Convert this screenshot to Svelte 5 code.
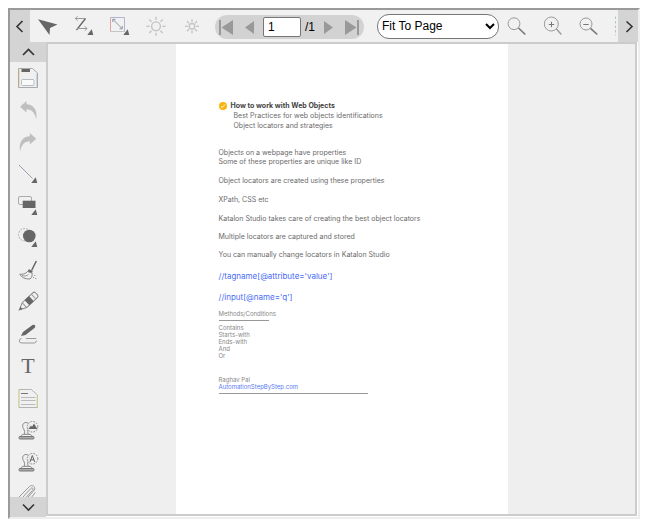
<script>
  let page = $state('1');
  let zoom = $state('Fit To Page');

  const rays = [0, 45, 90, 135, 180, 225, 270, 315];
  const facts = [
    'Object locators are created using these properties',
    'XPath, CSS etc',
    'Katalon Studio takes care of creating the best object locators',
    'Multiple locators are captured and stored',
    'You can manually change locators in Katalon Studio'
  ];
  const conditions = ['Contains', 'Starts-with', 'Ends-with', 'And', 'Or'];
</script>

{#snippet corner()}
  <path d="M21.3 25H27.3L25.7 19.3Z" fill="#666" />
{/snippet}

{#snippet sun(r, from, to)}
  <g fill="none" stroke="#c4c4c4" stroke-width="1.4">
    <circle cx="18" cy="16.3" {r} />
    {#each rays as a}
      <path d="M18 {16.3 - from}V{16.3 - to}" transform="rotate({a} 18 16.3)" />
    {/each}
  </g>
{/snippet}

{#snippet stamp()}
  <g fill="#f0f0f0" stroke="#888">
    <path d="M14 20.5C15.2 18 14.6 16.5 13.4 14.6C11.5 11 13.5 8.5 16 8.5C18.5 8.5 20.5 11 18.6 14.6C17.4 16.5 17.5 18 18.5 20.5Z" />
    <path d="M11 22C11.5 20.5 13 20.5 14 20.3H19C20.5 20.5 21.5 20.8 22 22" />
    <rect x="9" y="22.5" width="15" height="2.5" rx="1" fill="#aaa" stroke="#777" />
  </g>
  <circle cx="22.5" cy="12.7" r="5.3" fill="#f0f0f0" fill-opacity=".8" stroke="#888" stroke-dasharray="1.6 1.2" />
{/snippet}

<main class="viewer">
  <header class="top">
    <button class="scroll side" aria-label="Scroll left"><svg width="20" height="32"><path d="M12.5 11L7 16.5L12.5 22" /></svg></button>
    <div class="tools">
      <button class="tool" aria-label="Select"><svg viewBox="0 0 36 32"><path d="M8 9.3L27.5 14.5L20 18L19.5 25Z" fill="#666" /></svg></button>
      <button class="tool" aria-label="Polyline">
        <svg viewBox="0 0 36 32">
          <path d="M19.5 8.5L10.5 20" fill="none" stroke="#666" stroke-width="1.3" />
          <path d="M20 8.5H9.5M11.5 6.3L9.3 8.5L11.5 10.7M11 18.5H21M18.8 16.3L21 18.5L18.8 20.7" fill="none" stroke="#999" />
          {@render corner()}
        </svg>
      </button>
      <button class="tool" aria-label="Measure">
        <svg viewBox="0 0 36 32" fill="none">
          <path d="M8.5 21.5V7.5" stroke="#dca6a2" />
          <path d="M8.5 7.5H22.5V21.5" stroke="#b4b2d0" />
          <path d="M8.5 21.5H22.5" stroke="#c4c4c4" />
          <path d="M11 9.5L20 18.5M10.8 12V9.3H13.5M17.5 18.8H20.3V16" stroke="#8c98a8" />
          {@render corner()}
        </svg>
      </button>
      <button class="tool" aria-label="Brighter"><svg viewBox="0 0 36 32">{@render sun(4.4, 6.4, 9.5)}</svg></button>
      <button class="tool" aria-label="Darker"><svg viewBox="0 0 36 32">{@render sun(2.8, 4.3, 7)}</svg></button>

      <div class="pager">
        <button aria-label="First page"><svg width="14" height="15"><path d="M0 0H2V15H0ZM14 0V15L2.5 7.5Z" /></svg></button>
        <button class="prev" aria-label="Previous page"><svg width="9" height="13"><path d="M9 0V13L0 6.5Z" /></svg></button>
        <label><input aria-label="Page" bind:value={page} /><span>/1</span></label>
        <button class="next" aria-label="Next page"><svg width="9" height="13"><path d="M0 0V13L9 6.5Z" /></svg></button>
        <button aria-label="Last page"><svg width="14" height="15"><path d="M12 0H14V15H12ZM0 0V15L11.5 7.5Z" /></svg></button>
      </div>

      <select aria-label="Zoom" bind:value={zoom}><option>Fit To Page</option></select>

      <button class="tool" aria-label="Magnifier">
        <svg viewBox="0 0 36 32" fill="none" stroke="#999"><circle cx="15" cy="13.7" r="5.9" /><path d="M19.5 18L26.3 24.5" stroke="#777" stroke-width="1.6" /></svg>
      </button>
      <button class="tool" aria-label="Zoom in">
        <svg viewBox="0 0 36 32" fill="none" stroke="#999"><circle cx="16.3" cy="14" r="7" /><path d="M13.8 14.5H19.2M16.5 11.8V17.2" stroke="#777" /><path d="M21.5 19L26.3 24.5" stroke-width="1.3" /></svg>
      </button>
      <button class="tool" aria-label="Zoom out">
        <svg viewBox="0 0 36 32" fill="none" stroke="#999"><circle cx="15" cy="14" r="6" /><path d="M12.3 14.5H17.7" stroke="#777" /><path d="M19.5 18.3L26.3 24.5" stroke="#777" stroke-width="1.6" /></svg>
      </button>
      <button class="tool" aria-label="Marquee zoom">
        <svg viewBox="0 0 36 32" fill="none" stroke="#b0c4ce"><path d="M8.5 6.5V25.5M12 6.5H25M12 25.5H25M25 6.5V25.5" stroke-dasharray="2.5 2" /></svg>
      </button>
    </div>
    <button class="scroll side" aria-label="Scroll right"><svg width="20" height="32"><path d="M8.5 11.5L14 16.5L8.5 22" /></svg></button>
  </header>

  <div class="body">
    <nav>
      <button class="scroll" aria-label="Scroll up"><svg width="36" height="20"><path d="M13 13L18.5 7.5L24 13" /></svg></button>
      <div class="rail">
        <button class="tool" aria-label="Save">
          <svg viewBox="0 0 36 32" fill="none">
            <path d="M8.5 25.5V6.5H22.5L27.5 11V25.5Z" stroke="#aaa" />
            <path d="M9.5 24.5V7.5" stroke="#f0dcae" />
            <path d="M26.5 24.5V12" stroke="#c5d5f0" />
            <rect x="11.5" y="7" width="8.5" height="3" fill="#666" />
            <rect x="11.5" y="17.5" width="12.5" height="6" rx="1" fill="#fafafa" stroke="#b4bec4" />
          </svg>
        </button>
        <button class="tool" aria-label="Undo">
          <svg viewBox="0 0 36 32"><path d="M10 12.7L16.5 7V10.2C23 10.4 28 15.5 26.2 25.5C25 19 22 15.3 16.5 15.2V18.5Z" fill="#bfbfbf" /></svg>
        </button>
        <button class="tool" aria-label="Redo">
          <svg viewBox="0 0 36 32"><path d="M26.3 12.7L19.8 7V10.2C13.3 10.4 8.3 15.5 10.1 25.5C11.3 19 14.3 15.3 19.8 15.2V18.5Z" fill="#bfbfbf" /></svg>
        </button>
        <button class="tool" aria-label="Line">
          <svg viewBox="0 0 36 32"><path d="M9 7L22.5 20.5" stroke="#9a9cb8" />{@render corner()}</svg>
        </button>
        <button class="tool" aria-label="Rectangle">
          <svg viewBox="0 0 36 32"><rect x="8.5" y="6.5" width="13" height="8" rx="1.5" fill="none" stroke="#aaa" /><rect x="12.7" y="10.7" width="12.8" height="7.3" fill="#666" />{@render corner()}</svg>
        </button>
        <button class="tool" aria-label="Ellipse">
          <svg viewBox="0 0 36 32"><circle cx="14.7" cy="12.7" r="6.2" fill="none" stroke="#aaa" stroke-dasharray="1.8 1.2" /><circle cx="19.3" cy="14" r="6.3" fill="#666" />{@render corner()}</svg>
        </button>
        <button class="tool" aria-label="Clear">
          <svg viewBox="0 0 36 32" fill="none">
            <path d="M26.3 7L21.8 16" stroke="#666" stroke-width="1.5" />
            <path d="M18.8 15.2L22.8 16.8L22 19L17.5 17.5Z" fill="#666" />
            <path d="M17.5 17.5C15.5 20 12.5 20.5 9.8 20.2C11.5 23.5 15 25.3 20 25C22 23.5 22.5 21 22 19Z" stroke="#888" />
            <path d="M12 21.5C14.5 22.5 17 22 18.5 20.5" stroke="#999" />
            <path d="M23 23.5H24M24.3 21.5H25.3M25.3 24.5H26.3" stroke="#888" />
          </svg>
        </button>
        <button class="tool" aria-label="Highlight">
          <svg viewBox="0 0 36 32">
            <g transform="rotate(-43 18.3 15.5)">
              <path d="M6 15.5L13 12.2H27.5Q29.5 12.2 29.5 14V17Q29.5 18.8 27.5 18.8H13Z" fill="#f0f0f0" stroke="#888" />
              <path d="M6 15.5L9 13.9V17.1Z" fill="#666" />
              <rect x="16.5" y="12" width="6" height="7" fill="#666" />
              <path d="M13 12.5V18.5M25.5 12.5V18.5" stroke="#999" />
            </g>
          </svg>
        </button>
        <button class="tool" aria-label="Freehand">
          <svg viewBox="0 0 36 32">
            <path d="M11 18L13 14L22.5 7Q24.5 6 25.2 7.8Q25.5 9 24.5 10L15.5 17Z" fill="#666" />
            <path d="M16 20.5H26.3M11.5 20.5Q9 21 9.2 23Q9.4 25 12 25H24.5Q26.5 24.5 26.3 22.5" fill="none" stroke="#999" />
          </svg>
        </button>
        <button class="tool letter" aria-label="Text">T</button>
        <button class="tool" aria-label="Note">
          <svg viewBox="0 0 36 32" fill="none">
            <path d="M9 25.5V7.5H21.3L27.5 13V25.5Z" stroke="#b4b4b4" />
            <path d="M9.5 25V8M27 25V14" stroke="#dfe09a" />
            <path d="M11 11.5H18" stroke="#777" />
            <path d="M11 15.5H25.5M11 18.5H25.5M11 22.5H25.5" stroke="#bbb" />
          </svg>
        </button>
        <button class="tool" aria-label="Picture stamp">
          <svg viewBox="0 0 36 32">{@render stamp()}<path d="M18.5 15L21 11.5L22 12.8L24 9.5L27.3 15Z" fill="#666" /></svg>
        </button>
        <button class="tool" aria-label="Text stamp">
          <svg viewBox="0 0 36 32">{@render stamp()}<path d="M20 16L22.3 9.5L24.8 16M20.8 13.8H24" fill="none" stroke="#666" /></svg>
        </button>
        <button class="tool" aria-label="Attach">
          <svg viewBox="0 0 36 32" fill="none" stroke="#999"><path d="M9 19L19.5 8.5C22 6.2 26 8.5 24.3 12L13 25M12.5 19.5L20.8 10.5C22.5 9 23.8 10.5 22.5 12.3L11 25M17 25L25.3 14.5" /></svg>
        </button>
      </div>
      <button class="scroll" aria-label="Scroll down"><svg width="36" height="20"><path d="M13 7.5L18.5 13L24 7.5" /></svg></button>
    </nav>

    <section class="canvas">
      <article>
        <h1>
          <svg width="8" height="8" viewBox="0 0 8 8"><circle cx="4" cy="4" r="4" fill="#fbb40c" /><path d="M2 4.3L3.3 5.4L6 2.6" fill="none" stroke="#fff" /></svg>
          How to work with Web Objects
        </h1>
        <div class="sub">Best Practices for web objects identifications<br />Object locators and strategies</div>
        <p class="intro">Objects on a webpage have properties<br />Some of these properties are unique like ID</p>
        {#each facts as fact, i}
          <p class:tight={i > 2}>{fact}</p>
        {/each}
        <p class="xpath">//tagname[@attribute='value']</p>
        <p class="xpath">//input[@name='q']</p>
        <div class="small">
          <div>Methods/Conditions</div>
          <hr class="short" />
          {#each conditions as c}
            <div>{c}</div>
          {/each}
        </div>
        <div class="small sign">
          <div>Raghav Pal</div>
          <div><a href="#site">AutomationStepByStep.com</a></div>
          <hr />
        </div>
      </article>
    </section>
  </div>
</main>

<style>
  :global(body) { margin: 0; background: #fff; }
  * { box-sizing: border-box; }
  button { border: 0; padding: 0; margin: 0; background: none; display: block; flex: none; }
  svg { display: block; }

  .viewer {
    height: calc(100vh - 16px);
    margin: 8px 10px 8px 8px;
    border: 2px solid;
    border-color: #9a9a9a #eee #eee #9a9a9a;
    display: flex;
    flex-direction: column;
    font-family: "Liberation Sans", Arial, sans-serif;
  }
  .top { display: flex; height: 32px; flex: none; background: #f1f1f1; }
  .tools { flex: 1; min-width: 0; display: flex; align-items: center; overflow: hidden; }
  .tool { width: 36px; height: 32px; }
  .scroll { background: #d4d4d4; height: 20px; }
  .scroll.side { width: 20px; height: 32px; }
  .scroll path { fill: none; stroke: #333; stroke-width: 1.6; }

  .pager {
    flex: none;
    display: flex;
    align-items: center;
    height: 24px;
    margin: 2px 13px 0 5px;
    padding: 0 5px 0 4px;
    border-radius: 12px;
    background: #d2d2d2;
  }
  .pager path { fill: #999; }
  .prev { margin: 0 9px 0 12px; }
  .next { margin: 0 12px 0 9px; }
  .pager label { display: flex; align-items: center; gap: 4px; font-size: 12px; }
  input {
    width: 38px;
    height: 20px;
    padding: 0 4px;
    border: 1px solid #767676;
    border-radius: 2px;
    background: #fff;
    font: 12px "Liberation Sans", Arial, sans-serif;
  }
  select {
    flex: none;
    width: 122px;
    height: 25px;
    padding: 0;
    border: 1px solid #767676;
    border-radius: 12px;
    background: #fff;
    color: #000;
    font: 12px "Liberation Sans", Arial, sans-serif;
  }

  .body { flex: 1; min-height: 0; display: flex; }
  nav { width: 36px; flex: none; display: flex; flex-direction: column; background: #f0f0f0; }
  .rail { flex: 1; min-height: 0; overflow: hidden; }
  .letter { font: 22px/32px "Liberation Serif", serif; color: #666; text-align: center; }
  .canvas {
    flex: 1;
    margin: 0 1px 1px 0;
    border: 2px solid #ccc;
    background: #efefef;
    display: flex;
    justify-content: center;
  }
  article {
    width: 332px;
    padding: 57px 43px 0;
    background: #fff;
    color: #6a6a6a;
    font: 7px/9px Inter, "Open Sans", sans-serif;
    white-space: nowrap;
  }
  h1 { margin: 0; display: flex; align-items: center; gap: 4px; font-size: 7px; line-height: 10px; color: #444; }
  .sub { padding-left: 15px; line-height: 10px; }
  p { margin: 10px 0 0; }
  .intro { margin-top: 17px; }
  .tight { margin-top: 9px; }
  .xpath { margin-top: 10px; font-size: 8px; line-height: 11px; color: #4a6cf5; }
  .xpath:nth-last-of-type(2) { margin-top: 12px; }
  .small { margin-top: 7px; font-size: 6px; line-height: 7px; color: #888; }
  .sign { margin-top: 17px; }
  a { color: #5a7af5; text-decoration: none; }
  hr { width: 149px; height: 1px; margin: 3px 0; border: 0; background: #999; }
  .short { width: 50px; }
</style>
